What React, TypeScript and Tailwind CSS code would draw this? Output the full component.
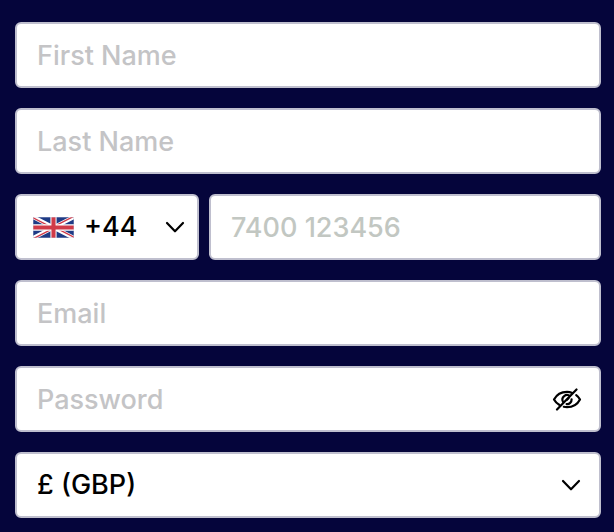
import { useState } from "react";
import type { InputHTMLAttributes } from "react";
import { twMerge } from "tailwind-merge";

const fieldStyles =
  "block w-full min-w-0 h-[66px] rounded-md border-2 border-[#bfbfce] bg-white px-5 text-[27px] font-medium text-black placeholder:text-[#c4c4c6] placeholder:opacity-100 outline-none focus:border-[#6c63ff]";

interface FieldProps extends InputHTMLAttributes<HTMLInputElement> {
  label: string;
}

const Field = ({ label, className, ...props }: FieldProps) => (
  <input aria-label={label} className={twMerge(fieldStyles, className)} {...props} />
);

const Chevron = ({ className }: { className?: string }) => (
  <svg
    viewBox="0 0 20 12"
    className={twMerge("h-3 w-5 shrink-0", className)}
    fill="none"
    stroke="#000"
    strokeWidth="2.2"
    strokeLinecap="round"
    strokeLinejoin="round"
    aria-hidden="true"
  >
    <path d="M2 2l8 8.300 8-8.300" />
  </svg>
);

const UnitedKingdomFlag = () => (
  <svg viewBox="0 0 60 30" preserveAspectRatio="none" className="h-[21px] w-[41px] shrink-0" aria-hidden="true">
    <clipPath id="uk-saltire">
      <path d="M30 15h30v15zv15H0zH0V0zV0h30z" />
    </clipPath>
    <path d="M0 0h60v30H0z" fill="#1f3b85" />
    <path d="M0 0l60 30M60 0L0 30" stroke="#fff" strokeWidth="6" />
    <path d="M0 0l60 30M60 0L0 30" clipPath="url(#uk-saltire)" stroke="#d03a48" strokeWidth="4" />
    <path d="M30 0v30M0 15h60" stroke="#fff" strokeWidth="9" />
    <path d="M30 0v30M0 15h60" stroke="#d03a48" strokeWidth="6" />
    <path d="M0 0h60v30H0z" fill="none" stroke="#c9cfe0" strokeWidth="1" />
  </svg>
);

const EyeOff = () => (
  <svg
    viewBox="0 0 30 24"
    className="h-6 w-[30px]"
    fill="none"
    stroke="#000"
    strokeWidth="2.2"
    strokeLinecap="round"
    strokeLinejoin="round"
    aria-hidden="true"
  >
    <path d="M20.300 5.900C18.700 5.200 16.900 4.800 15 4.800 9 4.800 4.200 8.300 2 12.500c1.300 2.400 3.200 4.200 5.500 5.500" />
    <path d="M11.800 19.800c1 .3 2.100.4 3.200.4 6 0 10.800-3.500 13-7.700-.9-1.700-2.200-3.200-3.800-4.400" />
    <path d="M18 9.100A4.600 4.600 0 0 0 11 14.800" />
    <path d="M14.600 17.100A4.600 4.600 0 0 0 19.600 12.300" />
    <path d="M15 12.800l1.500-1.500" />
    <path d="M5 22.500 24.500 2.500" />
  </svg>
);

const App = () => {
  const [showPassword, setShowPassword] = useState(false);

  return (
    <main className="min-h-screen bg-[#05053b] pt-[22px] pr-[13px] pb-3.5 pl-[15px] font-['Inter',sans-serif]">
      <form className="flex flex-col gap-5" onSubmit={(e) => e.preventDefault()}>
        <Field label="First Name" placeholder="First Name" autoComplete="given-name" />
        <Field label="Last Name" placeholder="Last Name" autoComplete="family-name" />
        <div className="flex gap-2.5">
          <button
            type="button"
            aria-label="Country code +44"
            aria-haspopup="listbox"
            className={twMerge(fieldStyles, "flex w-[184px] shrink-0 items-center px-3")}
          >
            <span className="pl-1">
              <UnitedKingdomFlag />
            </span>
            <span className="pl-2.5">+44</span>
            <Chevron className="ml-auto" />
          </button>
          <Field label="Phone number" type="tel" placeholder="7400 123456" className="placeholder:text-[#c2c7c2]" />
        </div>
        <Field label="Email" type="email" placeholder="Email" autoComplete="email" />
        <div className="relative">
          <Field
            label="Password"
            type={showPassword ? "text" : "password"}
            placeholder="Password"
            className="pr-16"
          />
          <button
            type="button"
            aria-label="Show password"
            onClick={() => setShowPassword(!showPassword)}
            className="absolute inset-y-0 right-[19px] flex items-center"
          >
            <EyeOff />
          </button>
        </div>
        <div className="relative">
          <select aria-label="Currency" defaultValue="GBP" className={twMerge(fieldStyles, "appearance-none")}>
            <option value="GBP">£ (GBP)</option>
            <option value="EUR">€ (EUR)</option>
            <option value="USD">$ (USD)</option>
          </select>
          <div className="pointer-events-none absolute inset-y-0 right-5 flex items-center">
            <Chevron />
          </div>
        </div>
      </form>
    </main>
  );
};

export default App;
